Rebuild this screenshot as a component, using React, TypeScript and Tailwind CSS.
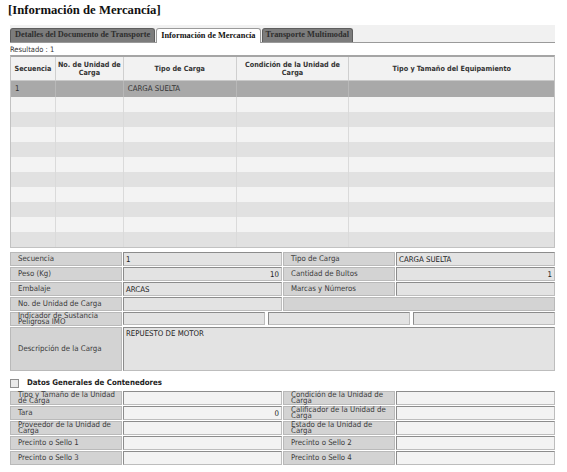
import React from 'react';

const SANS = "[font-family:'DejaVu_Sans_Condensed','DejaVu_Sans',sans-serif]";

const COLS = [45, 68, 113, 113, 205];
const HEADERS: React.ReactNode[] = [
  'Secuencia',
  <>No. de Unidad de<br />Carga</>,
  'Tipo de Carga',
  <>Condición de la Unidad de<br />Carga</>,
  'Tipo y Tamaño del Equipamiento',
];

const Label: React.FC<{ text: string; w: number; h?: number }> = ({ text, w, h = 14 }) => (
  <div
    className="flex items-center bg-[#d3d3d3] border border-[#b9b9b9] pl-[7px] pr-[3px] text-[7.8px] leading-[6.5px] text-[#3a3a3a] shrink-0"
    style={{ width: w, height: h }}
  >
    <span>{text}</span>
  </div>
);

const Field: React.FC<{ value?: string; w: number; h?: number; right?: boolean; light?: boolean; top?: boolean }> = ({ value = '', w, h = 14, right, light, top }) => (
  <div
    className={`flex shrink-0 border border-[#8c8c8c] border-r-[#bdbdbd] border-b-[#bdbdbd] px-[2px] text-[7.8px] leading-[9px] text-[#222] ${light ? 'bg-[#f3f3f3]' : 'bg-[#e3e3e3]'} ${right ? 'justify-end' : ''} ${top ? 'items-start pt-[1px]' : 'items-center'}`}
    style={{ width: w, height: h }}
  >
    {value}
  </div>
);

const Row: React.FC<{ children: React.ReactNode }> = ({ children }) => <div className="flex gap-[1px] h-[14px]">{children}</div>;

export default function App() {
  const emptyRows = Array.from({ length: 10 });
  return (
    <div className={`w-[567px] h-[472px] bg-white overflow-hidden ${SANS}`}>
      <div className="pl-[8px] pt-[3px] text-[12.7px] leading-[15px] font-bold text-[#111] [font-family:'Liberation_Serif',serif]">
        [Información de Mercancía]
      </div>

      {/* tabs */}
      <div className="mt-[7px] ml-[10px] w-[545px] h-[18px] bg-[#f1f1f1] border-b border-[#9a9a9a] flex items-end gap-[1px] [font-family:'Liberation_Serif',serif] text-[8.3px] font-bold">
        <div className="h-[14px] px-[4px] flex items-center bg-[#7c7c7c] text-[#2e2e2e] border border-[#5e5e5e] border-b-0 rounded-t-[3px]">
          Detalles del Documento de Transporte
        </div>
        <div className="h-[15px] px-[4px] flex items-center bg-white text-[#111] border border-[#9a9a9a] border-b-0 rounded-t-[3px] -mb-[1px]">
          Información de Mercancía
        </div>
        <div className="h-[14px] px-[3px] flex items-center bg-[#7c7c7c] text-[#2e2e2e] border border-[#5e5e5e] border-b-0 rounded-t-[3px]">
          Transporte Multimodal
        </div>
      </div>

      <div className="pl-[10px] pt-[2px] h-[12px] text-[7.5px] leading-[9px] text-[#333]">Resultado : 1</div>

      {/* grid */}
      <div className="ml-[10px] w-[545px] border border-[#c2c2c2] border-t-2 border-t-[#a5a5a5]">
        <div className="flex h-[24px] bg-[#f2f2f2] border-b border-[#c9c9c9]">
          {HEADERS.map((h, i) => (
            <div
              key={i}
              className="flex items-center justify-center text-center px-[1px] text-[7.2px] leading-[8px] font-bold text-[#333] border-r border-[#cfcfcf] last:border-r-0"
              style={{ width: COLS[i] }}
            >
              <span>{h}</span>
            </div>
          ))}
        </div>
        <div className="flex h-[16px] bg-[#a9a9a9] text-[7.8px] text-[#333]">
          {['1', '', 'CARGA SUELTA', '', ''].map((v, i) => (
            <div key={i} className="flex items-center pl-[4px] border-r border-[#b8b8b8] last:border-r-0" style={{ width: COLS[i] }}>
              {v}
            </div>
          ))}
        </div>
        {emptyRows.map((_, r) => (
          <div key={r} className={`flex h-[15px] ${r % 2 === 0 ? 'bg-[#f3f3f3]' : 'bg-[#e1e1e1]'}`}>
            {COLS.map((w, i) => (
              <div key={i} className="border-r border-[#dadada] last:border-r-0" style={{ width: w }} />
            ))}
          </div>
        ))}
      </div>

      {/* detail form */}
      <div className="ml-[10px] mt-[4px] w-[545px] flex flex-col gap-[1px]">
        <Row>
          <Label text="Secuencia" w={112} />
          <Field value="1" w={159} />
          <Label text="Tipo de Carga" w={112} />
          <Field value="CARGA SUELTA" w={159} />
        </Row>
        <Row>
          <Label text="Peso (Kg)" w={112} />
          <Field value="10" right w={159} />
          <Label text="Cantidad de Bultos" w={112} />
          <Field value="1" right w={159} />
        </Row>
        <Row>
          <Label text="Embalaje" w={112} />
          <Field value="ARCAS" w={159} />
          <Label text="Marcas y Números" w={112} />
          <Field w={159} />
        </Row>
        <Row>
          <Label text="No. de Unidad de Carga" w={112} />
          <Field w={159} />
          <div className="w-[272px] h-[14px] bg-[#d3d3d3] border border-[#b9b9b9]" />
        </Row>
        <Row>
          <Label text="Indicador de Sustancia Peligrosa IMO" w={112} />
          <div className="flex gap-[3px]">
            <Field w={142} h={13} />
            <Field w={142} h={13} />
            <Field w={142} h={13} />
          </div>
        </Row>
        <div className="flex gap-[1px] h-[44px]">
          <Label text="Descripción de la Carga" w={112} h={44} />
          <Field value="REPUESTO DE MOTOR" top w={432} h={44} />
        </div>
      </div>

      {/* contenedores */}
      <div className="ml-[10px] mt-[6px] flex items-center gap-[8px] h-[12px]">
        <div className="w-[9px] h-[9px] border border-[#8e8e8e] bg-[#e9e9e9]" />
        <span className="text-[7.8px] font-bold text-[#222]">Datos Generales de Contenedores</span>
      </div>
      <div className="ml-[10px] mt-[2px] w-[545px] flex flex-col gap-[1px]">
        <Row>
          <Label text="Tipo y Tamaño de la Unidad de Carga" w={112} />
          <Field light w={159} />
          <Label text="Condición de la Unidad de Carga" w={112} />
          <Field light w={159} />
        </Row>
        <Row>
          <Label text="Tara" w={112} />
          <Field light value="0" right w={159} />
          <Label text="Calificador de la Unidad de Carga" w={112} />
          <Field light w={159} />
        </Row>
        <Row>
          <Label text="Proveedor de la Unidad de Carga" w={112} />
          <Field light w={159} />
          <Label text="Estado de la Unidad de Carga" w={112} />
          <Field light w={159} />
        </Row>
        <Row>
          <Label text="Precinto o Sello 1" w={112} />
          <Field light w={159} />
          <Label text="Precinto o Sello 2" w={112} />
          <Field light w={159} />
        </Row>
        <Row>
          <Label text="Precinto o Sello 3" w={112} />
          <Field light w={159} />
          <Label text="Precinto o Sello 4" w={112} />
          <Field light w={159} />
        </Row>
      </div>
    </div>
  );
}
